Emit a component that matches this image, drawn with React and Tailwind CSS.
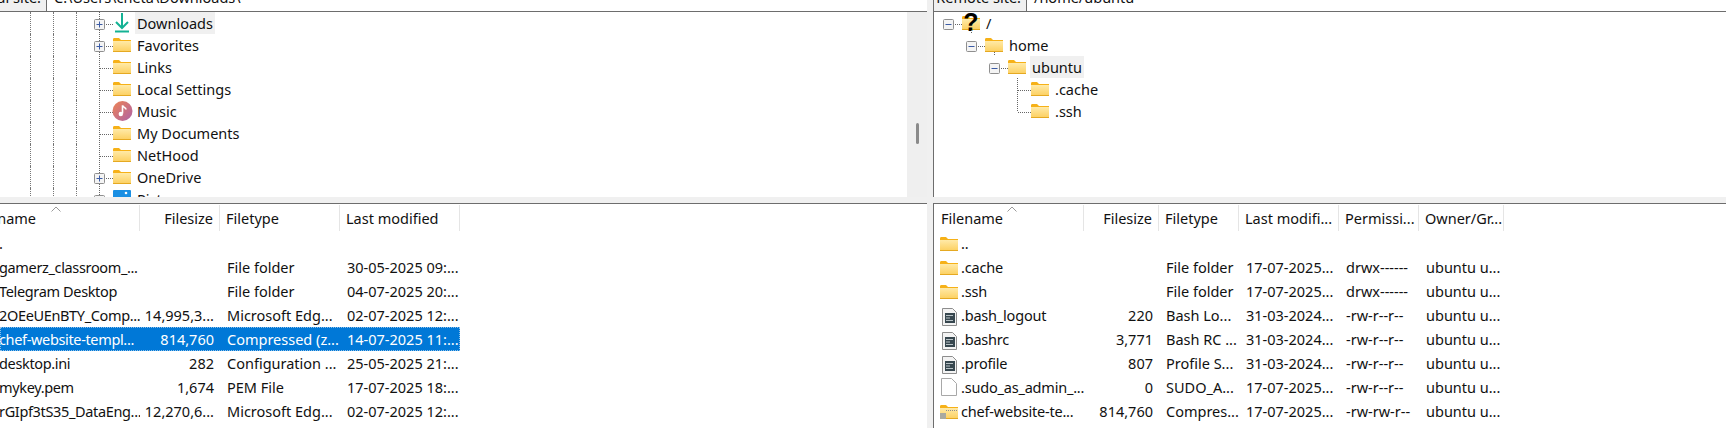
// FileZilla style local / remote panes
const leftTree = [
  { icon: "download", name: "Downloads", box: "+", line: "both", active: true },
  { icon: "folder", name: "Favorites", box: "+", line: "both" },
  { icon: "folder", name: "Links", line: "both" },
  { icon: "folder", name: "Local Settings", line: "both" },
  { icon: "music", name: "Music", line: "both" },
  { icon: "folder", name: "My Documents", line: "both" },
  { icon: "folder", name: "NetHood", line: "both" },
  { icon: "folder", name: "OneDrive", box: "+", line: "both" },
  { icon: "pictures", name: "Pictures", box: "+", line: "both" },
];

const remoteTree = [
  { depth: 0, icon: "unknown", name: "/", box: "-" },
  { depth: 1, icon: "folder", name: "home", box: "-", tail: true },
  { depth: 2, icon: "folder", name: "ubuntu", box: "-", active: true },
  { depth: 3, icon: "folder", name: ".cache", line: "both" },
  { depth: 3, icon: "folder", name: ".ssh", line: "up" },
];

const leftRows = [
  { cells: [".", "", "", ""] },
  { cells: ["gamerz_classroom_...", "", "File folder", "30-05-2025 09:..."] },
  { cells: ["Telegram Desktop", "", "File folder", "04-07-2025 20:..."] },
  { cells: ["2OEeUEnBTY_Comp...", "14,995,3...", "Microsoft Edg...", "02-07-2025 12:..."] },
  { cells: ["chef-website-templ...", "814,760", "Compressed (z...", "14-07-2025 11:..."], selected: true },
  { cells: ["desktop.ini", "282", "Configuration ...", "25-05-2025 21:..."] },
  { cells: ["mykey.pem", "1,674", "PEM File", "17-07-2025 18:..."] },
  { cells: ["rGIpf3tS35_DataEng...", "12,270,6...", "Microsoft Edg...", "02-07-2025 12:..."] },
];

const remoteRows = [
  { icon: "folder", cells: ["..", "", "", "", "", ""] },
  { icon: "folder", cells: [".cache", "", "File folder", "17-07-2025...", "drwx------", "ubuntu u..."] },
  { icon: "folder", cells: [".ssh", "", "File folder", "17-07-2025...", "drwx------", "ubuntu u..."] },
  { icon: "doc", cells: [".bash_logout", "220", "Bash Lo...", "31-03-2024...", "-rw-r--r--", "ubuntu u..."] },
  { icon: "doc", cells: [".bashrc", "3,771", "Bash RC ...", "31-03-2024...", "-rw-r--r--", "ubuntu u..."] },
  { icon: "doc", cells: [".profile", "807", "Profile S...", "31-03-2024...", "-rw-r--r--", "ubuntu u..."] },
  { icon: "blank", cells: [".sudo_as_admin_...", "0", "SUDO_A...", "17-07-2025...", "-rw-r--r--", "ubuntu u..."] },
  { icon: "zip", cells: ["chef-website-te...", "814,760", "Compres...", "17-07-2025...", "-rw-rw-r--", "ubuntu u..."] },
];

function FolderShape({ id }) {
  return (
    <>
      <defs>
        <linearGradient id={id} x1="0" y1="0" x2="0" y2="1">
          <stop offset="0" stopColor="#ffeaa8" />
          <stop offset="1" stopColor="#fccf5e" />
        </linearGradient>
      </defs>
      <path d="M0 5.5C0 4.6.5 4 1.4 4H6l2 2h10v3H0z" fill="#f6b118" />
      <rect x="0" y="7" width="18" height="11" fill={`url(#${id})`} />
      <rect x="0" y="17" width="18" height="1" fill="#e5a922" />
    </>
  );
}

function Icon({ type, tail }) {
  return (
    <svg width="18" height="22" viewBox="0 0 18 22" className="shrink-0 overflow-visible">
      {type === "folder" && <FolderShape id="folderFill" />}
      {type === "unknown" && (
        <>
          <FolderShape id="unknownFill" />
          <text x="9" y="19" textAnchor="middle" fontSize="25" fontWeight="700" fill="#000" className="font-['Liberation_Sans']">?</text>
          <path d="M9.5 18v4" stroke="#666" strokeDasharray="1 1" />
        </>
      )}
      {type === "download" && (
        <g fill="none" stroke="#14b294">
          <path d="M9 1v15M3 10l6 6 6-6" strokeWidth="2" />
          <path d="M2 19.5h14" strokeWidth="2" />
        </g>
      )}
      {type === "music" && (
        <>
          <defs>
            <linearGradient id="musicFill" x1="0" y1="0" x2="1" y2="1">
              <stop offset="0" stopColor="#ee8453" />
              <stop offset="1" stopColor="#ae62a8" />
            </linearGradient>
          </defs>
          <circle cx="9.5" cy="11" r="10" fill="url(#musicFill)" />
          <path d="M9.5 5.5v8" stroke="#fff" strokeWidth="1.6" />
          <path d="M9.5 5.5c.5 2 3.5 2 3.5 4" stroke="#fff" strokeWidth="1.6" fill="none" />
          <circle cx="7.8" cy="14" r="2.2" fill="#fff" />
        </>
      )}
      {type === "pictures" && (
        <>
          <rect x="0" y="2" width="18" height="14" rx="1" fill="#1a8fe3" />
          <circle cx="13" cy="5" r="1.3" fill="#fff" />
        </>
      )}
      {type === "doc" && (
        <>
          <path d="M2.5 3.5h10l4 4v13h-14z" fill="#f3f3f3" stroke="#8d8d8d" />
          <rect x="5" y="8" width="10" height="10" fill="#37474f" />
          <path d="M6 10.5h7M6 13h4M6 15.5h7" stroke="#b8c2c6" />
        </>
      )}
      {type === "blank" && <path d="M1.5 1.5h10l5 5v12h-15z" fill="#fff" stroke="#a8a8a8" />}
      {type === "zip" && (
        <>
          <FolderShape id="zipFill" />
          <path d="M6 9.5h12" stroke="#8d8d8d" strokeDasharray="1 1" />
          <rect x="0" y="12" width="6" height="6" fill="#a9a9a0" />
        </>
      )}
      {tail && <path d="M9.5 18v4" stroke="#666" strokeDasharray="1 1" />}
    </svg>
  );
}

// dotted connector + expander box; line x is the left edge of this cell
function Connector({ line, box }) {
  return (
    <svg width="14" height="22" viewBox="0 0 14 22" className="shrink-0 overflow-visible">
      {(line === "both" || line === "up") && <path d="M.5 0v12" stroke="#666" strokeDasharray="1 1" />}
      {line === "both" && <path d="M.5 12v10" stroke="#666" strokeDasharray="1 1" />}
      {(line || box) && <path d="M1 12.5h13" stroke="#666" strokeDasharray="1 1" />}
      {box && (
        <>
          <rect x="-4.5" y="7.5" width="10" height="10" rx="1" fill="#f4f4f4" stroke="#8f8f8f" />
          <path d="M-2.5 12.5h6" stroke="#3b5ba5" />
          {box === "+" && <path d="M.5 9.5v6" stroke="#3b5ba5" />}
        </>
      )}
    </svg>
  );
}

function Label({ row }) {
  return (
    <span className={`ml-1 h-[22px] px-[2px] leading-[23px] whitespace-nowrap ${row.active ? "bg-[#f0f0f0]" : ""}`}>
      {row.name}
    </span>
  );
}

function LocalTree() {
  return (
    <div className="flex-1 overflow-hidden pl-[30px]">
      {leftTree.map((row) => (
        <div key={row.name} className="flex h-[22px]">
          <span className="w-[23px] shrink-0 border-l border-dotted border-[#777]" />
          <span className="w-[23px] shrink-0 border-l border-dotted border-[#777]" />
          <span className="w-[23px] shrink-0 border-l border-dotted border-[#777]" />
          <Connector line={row.line} box={row.box} />
          <Icon type={row.icon} />
          <Label row={row} />
        </div>
      ))}
    </div>
  );
}

function RemoteTree() {
  return (
    <div className="flex-1 overflow-hidden pl-[14px]">
      {remoteTree.map((row) => (
        <div key={row.name} className="flex h-[22px]">
          {row.depth > 0 && <span className="w-[23px] shrink-0" />}
          {row.depth > 1 && <span className="w-[23px] shrink-0" />}
          {row.depth > 2 && <span className="w-[23px] shrink-0" />}
          <Connector line={row.line} box={row.box} />
          <Icon type={row.icon} tail={row.tail} />
          <Label row={row} />
        </div>
      ))}
    </div>
  );
}

function SiteBar({ label, value, labelClass }) {
  return (
    <div className="flex h-[12px] shrink-0 overflow-hidden border-b border-[#6d6d6d]">
      <div className={`flex h-[11px] shrink-0 items-end justify-end border-r border-[#6d6d6d] bg-[#f0f0f0] pb-[2px] ${labelClass}`}>
        <span className="whitespace-nowrap">{label}</span>
      </div>
      <div className="flex h-[11px] flex-1 items-end pb-[2px] pl-[7px]">
        <span className="whitespace-nowrap">{value}</span>
      </div>
    </div>
  );
}

function SortArrow() {
  return (
    <svg width="10" height="6" viewBox="0 0 10 6" className="absolute top-[2px] right-[-4px]">
      <path d="M.5 5.5 5 1l4.5 4.5" fill="none" stroke="#9a9a9a" />
    </svg>
  );
}

function HeaderCell({ children, className = "" }) {
  return (
    <div className={`mt-[1px] flex h-[26px] items-center overflow-hidden whitespace-nowrap border-r border-[#e5e5e5] px-[6px] pt-[1px] ${className}`}>
      {children}
    </div>
  );
}

function LocalList() {
  return (
    <div className="h-full w-[460px]">
      <div className="relative grid h-[27px] grid-cols-[140px_80px_120px_120px]">
        <HeaderCell className="pl-0">
          <span className="ml-[-26px]">Filename</span>
        </HeaderCell>
        <HeaderCell className="justify-end">Filesize</HeaderCell>
        <HeaderCell>Filetype</HeaderCell>
        <HeaderCell>Last modified</HeaderCell>
        <span className="absolute top-0 left-[57px]"><SortArrow /></span>
      </div>
      {leftRows.map((row) => (
        <div
          key={row.cells[0]}
          className={`grid h-[24px] grid-cols-[140px_80px_120px_120px] items-center whitespace-nowrap pt-[1px] ${row.selected ? "bg-[#0078d7] text-white outline-1 -outline-offset-1 outline-dotted outline-[#8cc0ea]" : ""}`}
        >
          <span className="ml-[-1px] overflow-hidden tracking-[-0.35px]">{row.cells[0]}</span>
          <span className="overflow-hidden pr-[6px] text-right">{row.cells[1]}</span>
          <span className="overflow-hidden pl-[7px]">{row.cells[2]}</span>
          <span className="overflow-hidden pl-[7px]">{row.cells[3]}</span>
        </div>
      ))}
    </div>
  );
}

function RemoteList() {
  return (
    <div className="h-full w-[570px]">
      <div className="relative grid h-[27px] grid-cols-[150px_75px_80px_100px_80px_85px]">
        <HeaderCell className="pl-[7px]">Filename</HeaderCell>
        <HeaderCell className="justify-end">Filesize</HeaderCell>
        <HeaderCell>Filetype</HeaderCell>
        <HeaderCell>Last modifi...</HeaderCell>
        <HeaderCell>Permissi...</HeaderCell>
        <HeaderCell>Owner/Gr...</HeaderCell>
        <span className="absolute top-0 left-[79px]"><SortArrow /></span>
      </div>
      {remoteRows.map((row) => (
        <div
          key={row.cells[0]}
          className="grid h-[24px] grid-cols-[150px_75px_80px_100px_80px_85px] items-center whitespace-nowrap pt-[1px]"
        >
          <span className="flex items-center overflow-hidden pl-[6px]">
            <Icon type={row.icon} />
            <span className="ml-[3px] tracking-[-0.2px]">{row.cells[0]}</span>
          </span>
          <span className="overflow-hidden pr-[6px] text-right">{row.cells[1]}</span>
          <span className="overflow-hidden pl-[7px]">{row.cells[2]}</span>
          <span className="overflow-hidden pl-[7px]">{row.cells[3]}</span>
          <span className="overflow-hidden pl-[7px]">{row.cells[4]}</span>
          <span className="overflow-hidden pl-[7px]">{row.cells[5]}</span>
        </div>
      ))}
    </div>
  );
}

export default function App() {
  return (
    <div className="flex h-[428px] w-[1726px] flex-col overflow-hidden bg-[#f0f0f0] font-['Noto_Sans',sans-serif] text-[14.5px] text-[#111]">
      <div className="flex h-[197px] shrink-0">
        <div className="flex w-[927px] shrink-0 flex-col bg-white">
          <SiteBar label="Local site:" value="C:\Users\cheta\Downloads\" labelClass="w-[47px] pr-[5px]" />
          <div className="flex min-h-0 flex-1">
            <LocalTree />
            <div className="flex w-[20px] shrink-0 justify-center bg-[#efefef] pt-[111px]">
              <div className="h-[21px] w-[3px] rounded-full bg-[#8a8a8a]" />
            </div>
          </div>
        </div>
        <div className="ml-[6px] flex flex-1 flex-col border-l border-[#6d6d6d] bg-white">
          <SiteBar label="Remote site:" value="/home/ubuntu" labelClass="w-[93px] pr-[5px]" />
          <RemoteTree />
        </div>
      </div>
      <div className="flex min-h-0 flex-1 pt-[6px]">
        <div className="w-[927px] shrink-0 overflow-hidden border-t border-[#6d6d6d] bg-white">
          <LocalList />
        </div>
        <div className="ml-[6px] flex-1 overflow-hidden border-t border-l border-[#6d6d6d] bg-white">
          <RemoteList />
        </div>
      </div>
    </div>
  );
}
